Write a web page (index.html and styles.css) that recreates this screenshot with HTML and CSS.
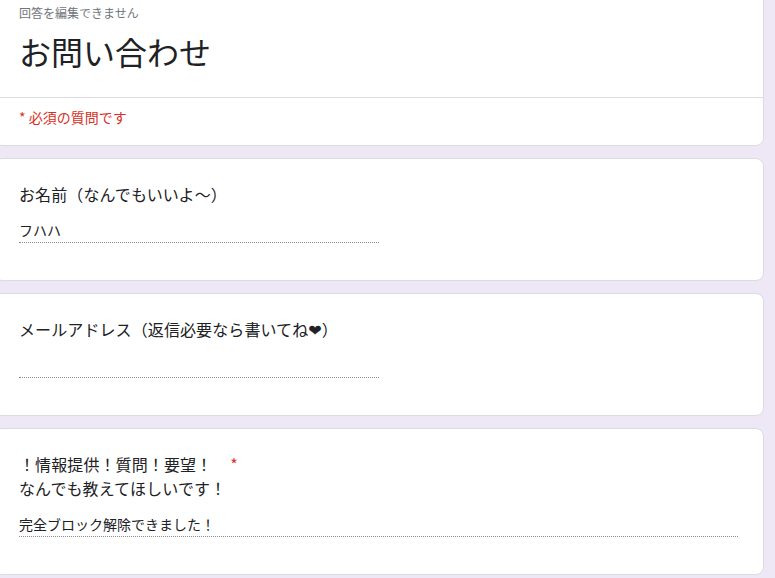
FILE: index.html
```html
<!DOCTYPE html>
<html>
<head>
    <title>お問い合わせ</title>
    <link rel="stylesheet" href="styles.css">
</head>
<body>
    <div class="formList">
        <div class="card headCard">
            <div class="headTop">
                <div class="notice">回答を編集できません</div>
                <div class="formTitle">お問い合わせ</div>
            </div>
            <div class="requiredNote">* 必須の質問です</div>
        </div>

        <div class="card question">
            <div class="qTitle">お名前（なんでもいいよ〜）</div>
            <div class="answer half">フハハ</div>
        </div>

        <div class="card question">
            <div class="qTitle">メールアドレス（返信必要なら書いてね<span class="heart">❤</span>）</div>
            <div class="answer half"></div>
        </div>

        <div class="card question">
            <div class="qTitle">！情報提供！質問！要望！　<span class="star">*</span><br>なんでも教えてほしいです！</div>
            <div class="answer full">完全ブロック解除できました！</div>
        </div>
    </div>
</body>
</html>
```

FILE: styles.css
```css
body {
    margin: 0;
    background-color: #ede7f6;
    font-family: "Noto Sans CJK JP", "Noto Sans", sans-serif;
    color: #202124;
    overflow: hidden;
}

.formList {
    display: flex;
    flex-direction: column;
    gap: 12px;
    width: 770px;
    margin: -20px 0 0 -6px;
}

.card {
    background-color: #fff;
    border: 1px solid #dadce0;
    border-radius: 8px;
}

.headTop {
    padding: 24px 24px 26px 24px;
    border-bottom: 1px solid #dadce0;
}

.notice {
    font-size: 12px;
    line-height: 16px;
    color: #70757a;
}

.formTitle {
    margin-top: 10px;
    font-size: 32px;
    line-height: 40px;
}

.requiredNote {
    padding: 9px 24px 18px 24px;
    font-size: 14px;
    line-height: 20px;
    color: #d93025;
}

.question {
    padding: 23px 24px 37px 24px;
}

.qTitle {
    font-size: 16px;
    line-height: 24px;
    letter-spacing: 0.1px;
}

.heart {
    font-family: "DejaVu Sans", sans-serif;
    font-size: 16px;
    line-height: 0;
}

.star {
    color: #d93025;
    padding-left: 2px;
}

.answer {
    margin-top: 14px;
    height: 20px;
    padding-bottom: 2px;
    font-size: 14px;
    line-height: 20px;
    border-bottom: 1px dotted #8a8a8a;
}

.answer.half {
    width: 360px;
}

.answer.full {
    width: 719px;
}
```
